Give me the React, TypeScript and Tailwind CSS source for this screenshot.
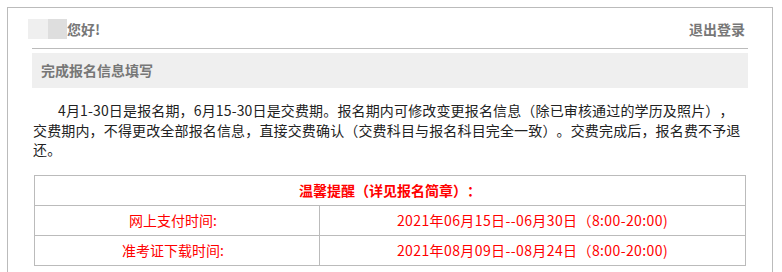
export default function App() {
  const font = { fontFamily: '"Microsoft YaHei", "Noto Sans CJK SC", "Liberation Sans", sans-serif' };

  const rows = [
    { label: "网上支付时间:", value: "2021年06月15日--06月30日（8:00-20:00)" },
    { label: "准考证下载时间:", value: "2021年08月09日--08月24日（8:00-20:00)" },
  ];

  return (
    <div className="h-[272px] overflow-hidden bg-white pl-[7px] pt-[7px] [text-spacing-trim:space-all]" style={font}>
      <div className="h-[300px] w-[766px] border border-[#bbbbbb]">
        {/* 顶部问候 */}
        <div className="mt-[11px] flex h-[20px] items-center justify-between pl-[20px] pr-[27px]">
          <div className="flex items-center">
            <span className="h-[20px] w-[20px] bg-[#efefef]" />
            <span className="h-[20px] w-[19px] bg-[#dedede]" />
            <span className="text-[14px] font-bold text-[#777]">您好!</span>
          </div>
          <span className="text-[14px] font-bold text-[#777]">退出登录</span>
        </div>

        <div className="mx-[24px] mt-[9px] border-t border-[#bbbbbb]" />

        {/* 标题 */}
        <div className="mx-[24px] mt-[4px] flex h-[35px] items-center bg-[#efefef] pl-[9px]">
          <span className="text-[14px] font-bold text-[#777]">完成报名信息填写</span>
        </div>

        {/* 说明 */}
        <p className="mx-[25px] mt-[13px] indent-[25px] text-[14px] leading-[19.5px] tracking-[0.15px] text-[#222]">
          4月1-30日是报名期，6月15-30日是交费期。报名期内可修改变更报名信息（除已审核通过的学历及照片），交费期内，不得更改全部报名信息，直接交费确认（交费科目与报名科目完全一致）。交费完成后，报名费不予退还。
        </p>

        {/* 温馨提醒 */}
        <table className="mt-[15px] ml-[26px] w-[712px] border-collapse text-[14px] text-[#ff0000]">
          <tbody>
            <tr className="h-[30px]">
              <td colSpan={2} className="border border-[#bbbbbb] text-center font-bold">
                温馨提醒（详见报名简章）：
              </td>
            </tr>
            {rows.map((r) => (
              <tr key={r.label} className="h-[30px]">
                <td className="w-[285px] border border-[#bbbbbb] pr-[8px] text-center">{r.label}</td>
                <td className="border border-[#bbbbbb] text-center tracking-[0.4px]">{r.value}</td>
              </tr>
            ))}
          </tbody>
        </table>
      </div>
    </div>
  );
}
